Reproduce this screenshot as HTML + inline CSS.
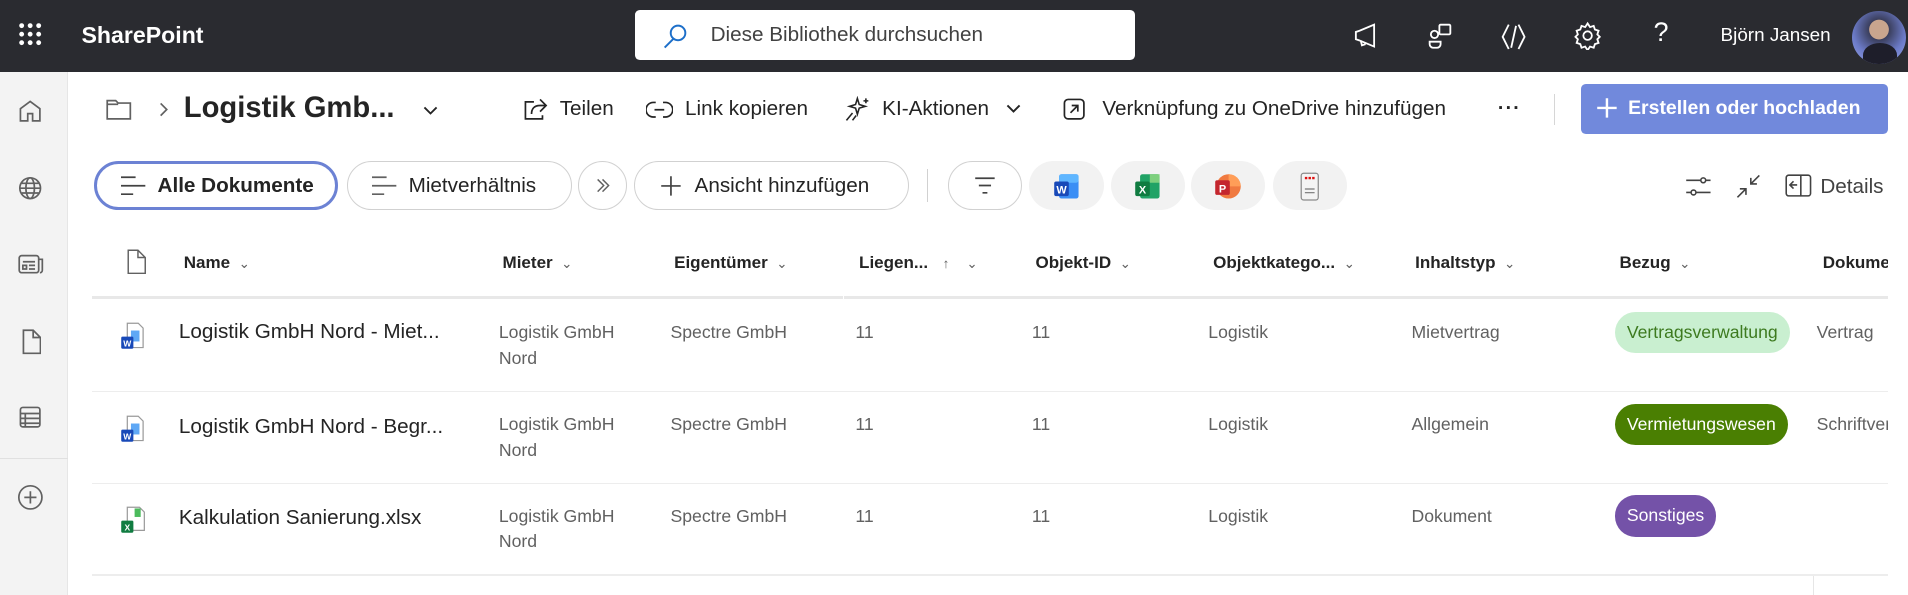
<!DOCTYPE html>
<html><head><meta charset="utf-8">
<style>
html{zoom:1.2168}
*{box-sizing:border-box;margin:0;padding:0}
body{width:1568px;height:489px;overflow:hidden;background:#fff;font-family:"Liberation Sans",sans-serif;color:#242424;position:relative}
.a{position:absolute;white-space:nowrap}
.top{left:0;top:0;width:1568px;height:59px;background:#2a2b30}
.rail{left:0;top:59px;width:56px;height:430px;background:#f3f3f3;border-right:1px solid #e6e6e6}
svg{display:block}
.pill{position:absolute;top:132px;height:41px;border:1px solid #d1d1d1;border-radius:21px;background:#fff;display:flex;align-items:center;font-size:17px;color:#242424}
.app{position:absolute;top:132px;height:41px;width:61px;border-radius:21px;background:#f2f2f2}
.hd{position:absolute;top:208px;font-size:14px;font-weight:bold;color:#242424}
.hd i{font-style:normal;font-weight:normal;color:#616161;font-size:11px;margin-left:7px}
.c{position:absolute;font-size:14.5px;color:#616161;line-height:21px}
.nm{position:absolute;font-size:17px;color:#242424}
.line{position:absolute;left:76px;width:1476px;height:1px;background:#ededed}
.tag{position:absolute;height:34px;border-radius:17px;font-size:14.5px;line-height:34px;padding:0 10px}
</style></head><body>
<div class="a top"></div>
<svg class="a" style="left:15px;top:18px" width="20" height="20" viewBox="0 0 20 20" fill="#fff"><circle cx="3" cy="3" r="2"/><circle cx="10" cy="3" r="2"/><circle cx="17" cy="3" r="2"/><circle cx="3" cy="10" r="2"/><circle cx="10" cy="10" r="2"/><circle cx="17" cy="10" r="2"/><circle cx="3" cy="17" r="2"/><circle cx="10" cy="17" r="2"/><circle cx="17" cy="17" r="2"/></svg>
<div class="a" style="left:67px;top:18px;color:#fff;font-weight:bold;font-size:19px">SharePoint</div>
<div class="a" style="left:522px;top:8px;width:411px;height:41px;background:#fff;border-radius:4px"></div>
<svg class="a" style="left:543px;top:18px" width="24" height="24" viewBox="0 0 24 24" fill="none" stroke="#1d6fc9" stroke-width="1.6"><circle cx="14" cy="9" r="6"/><path d="M10 14 3 21"/></svg>
<div class="a" style="left:584px;top:19px;font-size:17px;color:#424242">Diese Bibliothek durchsuchen</div>
<svg class="a" style="left:1110px;top:17px" width="24" height="24" viewBox="0 0 24 24" fill="none" stroke="#fff" stroke-width="1.5"><path d="M4 9v6l3 1 12 5V3L7 8z"/><path d="M8 16l1 4 3-1"/></svg>
<svg class="a" style="left:1172px;top:17px" width="24" height="24" viewBox="0 0 24 24" fill="none" stroke="#fff" stroke-width="1.5"><rect x="11" y="3" width="9" height="8" rx="1"/><circle cx="7" cy="11" r="3"/><path d="M3 17h9v2a3 3 0 0 1-3 3H6a3 3 0 0 1-3-3z"/></svg>
<svg class="a" style="left:1232px;top:17px" width="24" height="26" viewBox="0 0 24 26" fill="none" stroke="#fff" stroke-width="1.5"><path d="M8 3 3 13l5 10M16 3l5 10-5 10M14 4l-4 18"/></svg>
<svg class="a" style="left:1293px;top:17px" width="24" height="24" viewBox="0 0 24 24" fill="none" stroke="#fff" stroke-width="1.5"><circle cx="12" cy="12" r="3.5"/><path d="M12 2l2 3 3-1 1 3 3 1-1 3 2 2-2 2 1 3-3 1-1 3-3-1-2 3-2-3-3 1-1-3-3-1 1-3-2-2 2-2-1-3 3-1 1-3 3 1z"/></svg>
<div class="a" style="left:1359px;top:14px;color:#fff;font-size:22px">?</div>
<div class="a" style="left:1414px;top:20px;color:#fff;font-size:15.5px">Björn Jansen</div>
<div class="a" style="left:1522px;top:9px;width:44px;height:44px;border-radius:50%;background:radial-gradient(circle at 50% 35%,#c9a58e 0 22%,#3a3e5c 23%,#6c7bc8 60%,#9aa6e8 100%);overflow:hidden"><div style="position:absolute;left:9px;top:26px;width:28px;height:20px;border-radius:50% 50% 0 0;background:#1e1e2a"></div></div>
<div class="a rail"></div>
<svg class="a" style="left:15px;top:81px" width="20" height="20" viewBox="0 0 20 20" fill="none" stroke="#616161" stroke-width="1.4"><path d="M2 8 10 2l8 6v10h-6v-6H8v6H2z"/></svg>
<svg class="a" style="left:15px;top:145px" width="20" height="20" viewBox="0 0 20 20" fill="none" stroke="#616161" stroke-width="1.4"><circle cx="10" cy="10" r="8.5"/><ellipse cx="10" cy="10" rx="3.5" ry="8.5"/><path d="M1.5 10h17M3 6h14M3 14h14"/></svg>
<svg class="a" style="left:15px;top:207px" width="22" height="20" viewBox="0 0 22 20" fill="none" stroke="#616161" stroke-width="1.4"><rect x="1" y="3" width="16" height="14" rx="2"/><path d="M17 6h3v9a2 2 0 0 1-2 2M4 11h3v3H4zM9 11h5M4 8h10M9 14h5"/></svg>
<svg class="a" style="left:17px;top:270px" width="17" height="22" viewBox="0 0 17 22" fill="none" stroke="#616161" stroke-width="1.4"><path d="M2 1h8l6 6v13H2zM10 1v6h6"/></svg>
<svg class="a" style="left:15px;top:333px" width="20" height="20" viewBox="0 0 20 20" fill="none" stroke="#616161" stroke-width="1.4"><rect x="2" y="2" width="16" height="16" rx="2"/><path d="M2 7h16M2 11h16M2 15h16M6 7v11"/></svg>
<div class="a" style="left:0;top:376px;width:56px;height:1px;background:#e0e0e0"></div>
<svg class="a" style="left:14px;top:398px" width="22" height="22" viewBox="0 0 22 22" fill="none" stroke="#616161" stroke-width="1.4"><circle cx="11" cy="11" r="9.5"/><path d="M11 6v10M6 11h10"/></svg>
<svg class="a" style="left:87px;top:80px" width="22" height="20" viewBox="0 0 22 20" fill="none" stroke="#616161" stroke-width="1.4"><path d="M1 3h7l2 2h10v13H1z"/><path d="M1 6h9"/></svg>
<svg class="a" style="left:129px;top:83px" width="10" height="14" viewBox="0 0 10 14" fill="none" stroke="#616161" stroke-width="1.4"><path d="M3 2l5 5-5 5"/></svg>
<div class="a" style="left:151px;top:76px;font-size:24px;font-weight:bold">Logistik Gmb...</div>
<svg class="a" style="left:347px;top:86px" width="14" height="10" viewBox="0 0 14 10" fill="none" stroke="#242424" stroke-width="1.5"><path d="M2 2l5 5 5-5"/></svg>
<svg class="a" style="left:430px;top:80px" width="20" height="20" viewBox="0 0 20 20" fill="none" stroke="#242424" stroke-width="1.4"><path d="M14 2l5 5-5 5M19 7h-5c-5 0-7 3-7 7M9 4H2v14h14v-3"/></svg>
<div class="a" style="left:460px;top:80px;font-size:17px">Teilen</div>
<svg class="a" style="left:531px;top:82px" width="22" height="16" viewBox="0 0 22 16" fill="none" stroke="#242424" stroke-width="1.4"><path d="M8 2H6a6 6 0 0 0 0 12h2M14 2h2a6 6 0 0 1 0 12h-2M7 8h8"/></svg>
<div class="a" style="left:563px;top:80px;font-size:17px">Link kopieren</div>
<svg class="a" style="left:694px;top:79px" width="22" height="22" viewBox="0 0 22 22" fill="none" stroke="#242424" stroke-width="1.3"><path d="M11 2l1.5 5 5 1.5-5 1.5L11 15l-1.5-5-5-1.5 5-1.5zM7 14l-5 6M10 16l-3 4M16 4h4M18 2v4"/></svg>
<div class="a" style="left:725px;top:80px;font-size:17px">KI-Aktionen</div>
<svg class="a" style="left:826px;top:85px" width="14" height="10" viewBox="0 0 14 10" fill="none" stroke="#242424" stroke-width="1.6"><path d="M2 2l5 5 5-5"/></svg>
<svg class="a" style="left:873px;top:80px" width="20" height="20" viewBox="0 0 20 20" fill="none" stroke="#242424" stroke-width="1.4"><rect x="2" y="2" width="16" height="16" rx="3"/><path d="M7 13l6-6M8 7h5v5"/></svg>
<div class="a" style="left:906px;top:80px;font-size:17px">Verknüpfung zu OneDrive hinzufügen</div>
<div class="a" style="left:1231px;top:80px;font-size:16px;font-weight:bold;letter-spacing:1px">···</div>
<div class="a" style="left:1277px;top:77px;width:1px;height:26px;background:#d6d6d6"></div>
<div class="a" style="left:1299px;top:69px;width:253px;height:41px;background:#7189dc;border-radius:4px"></div>
<svg class="a" style="left:1312px;top:80px" width="18" height="18" viewBox="0 0 18 18" stroke="#fff" stroke-width="2"><path d="M9 1v16M1 9h16"/></svg>
<div class="a" style="left:1338px;top:80px;font-size:16px;font-weight:bold;color:#fff">Erstellen oder hochladen</div>
<div class="pill" style="left:77px;width:201px;border:2.5px solid #6c82d4;font-weight:bold"><svg style="margin:0 8px 0 20px" width="22" height="16" viewBox="0 0 22 16" stroke="#424242" stroke-width="1.4"><path d="M0 1h12M0 8h20M0 15h10"/></svg>Alle Dokumente</div>
<div class="pill" style="left:285px;width:185px"><svg style="margin:0 8px 0 20px" width="22" height="16" viewBox="0 0 22 16" stroke="#616161" stroke-width="1.4"><path d="M0 1h12M0 8h20M0 15h10"/></svg>Mietverhältnis</div>
<div class="pill" style="left:475px;width:40px;justify-content:center"><svg width="14" height="14" viewBox="0 0 14 14" fill="none" stroke="#616161" stroke-width="1.2"><path d="M3 2l5 5-5 5M7 2l5 5-5 5"/></svg></div>
<div class="pill" style="left:521px;width:226px"><svg style="margin:0 10px 0 21px" width="18" height="18" viewBox="0 0 18 18" stroke="#424242" stroke-width="1.4"><path d="M9 1v16M1 9h16"/></svg>Ansicht hinzufügen</div>
<div class="a" style="left:762px;top:139px;width:1px;height:27px;background:#d1d1d1"></div>
<div class="pill" style="left:779px;width:61px;justify-content:center"><svg width="18" height="14" viewBox="0 0 18 14" stroke="#424242" stroke-width="1.4"><path d="M1 1h16M4 7h10M7 13h4"/></svg></div>
<div class="app" style="left:846px"><svg style="margin:10px 0 0 19px" width="22" height="22" viewBox="0 0 22 22"><rect x="5" y="1" width="16" height="20" rx="2" fill="#3a8ef5"/><rect x="5" y="1" width="16" height="7" rx="2" fill="#5fb6ff"/><rect x="1" y="7" width="12" height="12" rx="1.5" fill="#1849b8"/><text x="7" y="17" font-size="9" font-weight="bold" fill="#fff" text-anchor="middle" font-family="Liberation Sans">W</text></svg></div>
<div class="app" style="left:913px"><svg style="margin:10px 0 0 19px" width="22" height="22" viewBox="0 0 22 22"><rect x="5" y="1" width="16" height="20" rx="2" fill="#21a366"/><rect x="13" y="1" width="8" height="7" fill="#7ed07e"/><rect x="1" y="7" width="12" height="12" rx="1.5" fill="#107c41"/><text x="7" y="17" font-size="9" font-weight="bold" fill="#fff" text-anchor="middle" font-family="Liberation Sans">X</text></svg></div>
<div class="app" style="left:979px"><svg style="margin:10px 0 0 19px" width="22" height="22" viewBox="0 0 22 22"><circle cx="12" cy="11" r="10" fill="#f07a40"/><path d="M12 1a10 10 0 0 1 10 10H12z" fill="#ff9e58"/><rect x="1" y="6" width="12" height="12" rx="1.5" fill="#c4262e"/><text x="7" y="16" font-size="9" font-weight="bold" fill="#fff" text-anchor="middle" font-family="Liberation Sans">P</text></svg></div>
<div class="app" style="left:1046px"><svg style="margin:9px 0 0 22px" width="16" height="24" viewBox="0 0 16 24"><rect x="1" y="1" width="14" height="22" rx="2" fill="#f4f4f4" stroke="#8a8a8a"/><path d="M4 5h2M7 5h2M10 5h2" stroke="#d11" stroke-width="2"/><path d="M4 14h8M4 17h8" stroke="#777"/></svg></div>
<svg class="a" style="left:1385px;top:142px" width="22" height="22" viewBox="0 0 22 22" fill="none" stroke="#424242" stroke-width="1.3"><path d="M1 6h12M17 6h4M1 16h4M9 16h12"/><circle cx="15" cy="6" r="2"/><circle cx="7" cy="16" r="2"/></svg>
<svg class="a" style="left:1426px;top:142px" width="22" height="22" viewBox="0 0 22 22" fill="none" stroke="#424242" stroke-width="1.3"><path d="M20 2l-7 7M13 4v5h5M2 20l7-7M4 13h5v5"/></svg>
<svg class="a" style="left:1467px;top:143px" width="22" height="20" viewBox="0 0 22 20" fill="none" stroke="#424242" stroke-width="1.3"><rect x="1" y="1" width="20" height="17" rx="2"/><path d="M13 1v17M10 9H4M7 6 4 9l3 3"/></svg>
<div class="a" style="left:1496px;top:144px;font-size:17px;color:#424242">Details</div>
<svg class="a" style="left:104px;top:205px" width="16" height="21" viewBox="0 0 16 21" fill="none" stroke="#616161" stroke-width="1.2"><path d="M1 1h8l6 6v13H1zM9 1v6h6"/></svg>
<div class="hd" style="left:151px">Name<i>⌄</i></div>
<div class="hd" style="left:413px">Mieter<i>⌄</i></div>
<div class="hd" style="left:554px">Eigentümer<i>⌄</i></div>
<div class="hd" style="left:706px">Liegen...<i style="margin-left:12px">↑</i><i style="margin-left:14px">⌄</i></div>
<div class="hd" style="left:851px">Objekt-ID<i>⌄</i></div>
<div class="hd" style="left:997px">Objektkatego...<i>⌄</i></div>
<div class="hd" style="left:1163px">Inhaltstyp<i>⌄</i></div>
<div class="hd" style="left:1331px">Bezug<i>⌄</i></div>
<div class="hd" style="left:1498px;width:54px;overflow:hidden">Dokumente</div>
<div class="a" style="left:76px;top:243px;width:1476px;height:3px;background:#e8e8e8"></div>
<div class="a" style="left:693px;top:243px;width:1px;height:3px;background:#fff"></div>
<div class="line" style="top:321px"></div>
<div class="line" style="top:397px"></div>
<div class="line" style="top:472px"></div>
<div class="a" style="left:1490px;top:473px;width:1px;height:16px;background:#e6e6e6"></div>
<svg class="a" style="left:99px;top:265px" width="20" height="24" viewBox="0 0 20 24"><path d="M6 1h9l4 4v16H6z" fill="#fff" stroke="#9a9a9a"/><rect x="9" y="7" width="7" height="9" fill="#5fa8f5"/><rect x="1" y="12" width="10" height="10" rx="1" fill="#1849b8"/><text x="6" y="20" font-size="7" font-weight="bold" fill="#fff" text-anchor="middle" font-family="Liberation Sans">W</text></svg>
<div class="nm" style="left:147px;top:263px">Logistik GmbH Nord - Miet...</div>
<svg class="a" style="left:99px;top:341px" width="20" height="24" viewBox="0 0 20 24"><path d="M6 1h9l4 4v16H6z" fill="#fff" stroke="#9a9a9a"/><rect x="9" y="7" width="7" height="9" fill="#5fa8f5"/><rect x="1" y="12" width="10" height="10" rx="1" fill="#1849b8"/><text x="6" y="20" font-size="7" font-weight="bold" fill="#fff" text-anchor="middle" font-family="Liberation Sans">W</text></svg>
<div class="nm" style="left:147px;top:341px">Logistik GmbH Nord - Begr...</div>
<svg class="a" style="left:99px;top:416px" width="22" height="24" viewBox="0 0 22 24"><path d="M6 1h10l4 4v15H6z" fill="#fff" stroke="#9a9a9a"/><rect x="12" y="2" width="5" height="7" fill="#4cbb5c"/><rect x="1" y="12" width="10" height="10" rx="1" fill="#107c41"/><text x="6" y="20" font-size="7" font-weight="bold" fill="#fff" text-anchor="middle" font-family="Liberation Sans">X</text></svg>
<div class="nm" style="left:147px;top:416px">Kalkulation Sanierung.xlsx</div>
<div class="c" style="left:410px;top:263px">Logistik GmbH<br>Nord</div>
<div class="c" style="left:551px;top:263px">Spectre GmbH</div>
<div class="c" style="left:703px;top:263px">11</div>
<div class="c" style="left:848px;top:263px">11</div>
<div class="c" style="left:993px;top:263px">Logistik</div>
<div class="c" style="left:1160px;top:263px">Mietvertrag</div>
<div class="tag" style="left:1327px;top:256px;background:#c9efd0;color:#3d7a1f">Vertragsverwaltung</div>
<div class="c" style="left:1493px;top:263px">Vertrag</div>
<div class="c" style="left:410px;top:339px">Logistik GmbH<br>Nord</div>
<div class="c" style="left:551px;top:339px">Spectre GmbH</div>
<div class="c" style="left:703px;top:339px">11</div>
<div class="c" style="left:848px;top:339px">11</div>
<div class="c" style="left:993px;top:339px">Logistik</div>
<div class="c" style="left:1160px;top:339px">Allgemein</div>
<div class="tag" style="left:1327px;top:332px;background:#4a7f02;color:#fff">Vermietungswesen</div>
<div class="c" style="left:1493px;top:339px;width:59px;overflow:hidden">Schriftverkehr</div>
<div class="c" style="left:410px;top:414px">Logistik GmbH<br>Nord</div>
<div class="c" style="left:551px;top:414px">Spectre GmbH</div>
<div class="c" style="left:703px;top:414px">11</div>
<div class="c" style="left:848px;top:414px">11</div>
<div class="c" style="left:993px;top:414px">Logistik</div>
<div class="c" style="left:1160px;top:414px">Dokument</div>
<div class="tag" style="left:1327px;top:407px;background:#7452a8;color:#fff">Sonstiges</div>
<div class="a" style="left:1552px;top:59px;width:16px;height:430px;background:#fff"></div>
</body></html>
